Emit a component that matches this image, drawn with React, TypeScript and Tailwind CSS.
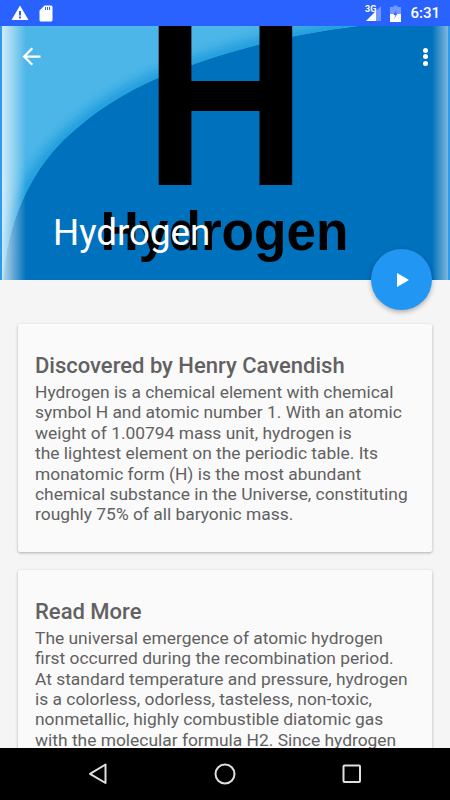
import React from 'react'

const cards = [
  {
    title: 'Discovered by Henry Cavendish',
    lines: [
      'Hydrogen is a chemical element with chemical',
      'symbol H and atomic number 1. With an atomic',
      'weight of 1.00794 mass unit, hydrogen is',
      'the lightest element on the periodic table. Its',
      'monatomic form (H) is the most abundant',
      'chemical substance in the Universe, constituting',
      'roughly 75% of all baryonic mass.',
    ],
  },
  {
    title: 'Read More',
    lines: [
      'The universal emergence of atomic hydrogen',
      'first occurred during the recombination period.',
      'At standard temperature and pressure, hydrogen',
      'is a colorless, odorless, tasteless, non-toxic,',
      'nonmetallic, highly combustible diatomic gas',
      'with the molecular formula H2. Since hydrogen',
      'readily forms covalent compounds with most',
    ],
  },
]

const curve = 'C290 8 220 26 158 52 C125 66 95 85 68 110 C35 140 8 190 3 254'

function StatusBar() {
  return (
    <div className="relative flex h-[26px] shrink-0 items-center bg-[#2962ff] pl-[11px] pr-[10px] text-white">
      <svg width="18" height="16" viewBox="0 0 18 16" fill="white">
        <path fillRule="evenodd" d="M9 0.5 L17.5 15 H0.5 Z M8 6 V10.5 H10 V6 Z M8 11.5 V13.5 H10 V11.5 Z" />
      </svg>
      <svg className="ml-[10px]" width="14" height="17" viewBox="0 0 14 17" fill="white">
        <path fillRule="evenodd" d="M5.5 0.5 H12 Q13.5 0.5 13.5 2 V15 Q13.5 16.5 12 16.5 H2 Q0.5 16.5 0.5 15 V5.5 Z M6 2 V5 H7 V2 Z M8 2 V5 H9 V2 Z M10 2 V5 H11 V2 Z" />
      </svg>
      <div className="flex-1" />
      <svg width="15" height="16" viewBox="0 0 15 16">
        <path d="M15 1 V16 H0 Z" fill="white" fillOpacity="0.35" />
        <path d="M10 6 V16 H0 Z" fill="white" />
      </svg>
      <span className="absolute left-[365px] top-[4px] text-[9px] font-bold leading-[10px]">3G</span>
      <svg className="ml-[9px]" width="11" height="17" viewBox="0 0 11 17">
        <path d="M3.5 0.5 H7.5 V2 H11 V17 H0 V2 H3.5 Z" fill="white" fillOpacity="0.35" />
        <path d="M0 9 H11 V17 H0 Z" fill="white" />
        <path d="M6.5 5 L3.5 10 H5.5 L4 14 L7.5 8.5 H5.5 Z" fill="#2962ff" />
      </svg>
      <span className="ml-[9px] text-[15px] font-medium leading-none">6:31</span>
    </div>
  )
}

function HeroPicture() {
  return (
    <svg className="absolute inset-0" width="450" height="254" viewBox="0 0 450 254">
      <defs>
        <linearGradient id="leftEdge" x1="0" x2="1" y1="0" y2="0">
          <stop offset="0" stopColor="white" stopOpacity="0.75" />
          <stop offset="1" stopColor="white" stopOpacity="0" />
        </linearGradient>
        <linearGradient id="rightEdge" x1="0" x2="1" y1="0" y2="0">
          <stop offset="0" stopColor="white" stopOpacity="0" />
          <stop offset="1" stopColor="white" stopOpacity="0.5" />
        </linearGradient>
        <clipPath id="glowArea">
          <path d={`M2 0 H358 ${curve} H2 Z`} />
        </clipPath>
        <filter id="soft" x="-20%" y="-20%" width="140%" height="140%">
          <feGaussianBlur stdDeviation="6" />
        </filter>
      </defs>
      <rect width="450" height="254" fill="#0071bc" />
      <path d={`M2 0 H358 ${curve} H2 Z`} fill="#4db6e8" />
      <g clipPath="url(#glowArea)">
        <path d={`M358 0 ${curve}`} fill="none" stroke="#1f9bdc" strokeWidth="14" filter="url(#soft)" />
      </g>
      <text x="143.500" y="159" fontFamily="'Liberation Sans', sans-serif" fontWeight="700" fontSize="250" fill="black" textLength="164" lengthAdjust="spacingAndGlyphs">H</text>
      <text x="100.500" y="224" fontFamily="'Liberation Sans', sans-serif" fontWeight="700" fontSize="55" fill="black" textLength="248" lengthAdjust="spacingAndGlyphs">Hydrogen</text>
      <rect x="2" width="24" height="254" fill="url(#leftEdge)" />
      <rect x="432" width="16" height="254" fill="url(#rightEdge)" />
      <rect width="2" height="254" fill="#2f9bee" />
      <rect x="448" width="2" height="254" fill="#2f9bee" />
    </svg>
  )
}

function Card({ title, lines }: { title: string; lines: string[] }) {
  return (
    <div className="mb-[18px] rounded-[2px] bg-[#fafafa] pb-[27px] pl-[17px] pr-[18px] pt-[28px] shadow-[0_1px_3px_rgba(0,0,0,0.3)]">
      <h2 className="mb-[2px] text-[22px] font-medium leading-[28px] text-[#616161]">{title}</h2>
      <div className="text-[17.4px] leading-[20.4px] text-[#616161]">
        {lines.map((line) => (
          <p key={line} className="whitespace-nowrap">{line}</p>
        ))}
      </div>
    </div>
  )
}

export default function App() {
  return (
    <div className="relative flex h-[800px] w-[450px] flex-col overflow-hidden bg-[#f5f5f5] font-['Roboto',sans-serif]">
      <StatusBar />
      <div className="relative h-[254px] shrink-0">
        <HeroPicture />
        <div className="relative flex items-center justify-between pl-[18px] pr-[22px] pt-[17px]">
          <svg width="27" height="27" viewBox="0 0 24 24" fill="white">
            <path d="M20 11H7.83l5.59-5.59L12 4l-8 8 8 8 1.41-1.41L7.83 13H20v-2z" />
          </svg>
          <div className="flex flex-col gap-[1.500px]">
            <span className="h-[5px] w-[5px] rounded-full bg-white" />
            <span className="h-[5px] w-[5px] rounded-full bg-white" />
            <span className="h-[5px] w-[5px] rounded-full bg-white" />
          </div>
        </div>
        <div className="absolute left-[53px] top-[185px] text-[36.7px] leading-[44px] text-white">Hydrogen</div>
      </div>
      <div className="absolute left-[371px] top-[249px] flex h-[61px] w-[61px] items-center justify-center rounded-full bg-[#2196f3] pl-[3px] shadow-[0_2px_5px_rgba(0,0,0,0.3)]">
        <svg width="14" height="16" viewBox="0 0 14 16" fill="white">
          <path d="M1 1 L13 8 L1 15 Z" />
        </svg>
      </div>
      <div className="min-h-0 flex-1 overflow-hidden px-[18px] pt-[44px]">
        {cards.map((card) => (
          <Card key={card.title} title={card.title} lines={card.lines} />
        ))}
      </div>
      <div className="flex h-[52px] shrink-0 items-center justify-between bg-black px-[88px]">
        <svg width="20" height="22" viewBox="0 0 20 22" fill="none" stroke="#e0e0e0" strokeWidth="2" strokeLinejoin="round">
          <path d="M17.5 1.5 V20 L2 10.8 Z" />
        </svg>
        <svg width="22" height="22" viewBox="0 0 22 22" fill="none" stroke="#e0e0e0" strokeWidth="2">
          <circle cx="11" cy="11" r="9.5" />
        </svg>
        <svg width="20" height="20" viewBox="0 0 20 20" fill="none" stroke="#e0e0e0" strokeWidth="2" strokeLinejoin="round">
          <rect x="1.500" y="1.500" width="16.5" height="16.5" rx="1" />
        </svg>
      </div>
    </div>
  )
}
